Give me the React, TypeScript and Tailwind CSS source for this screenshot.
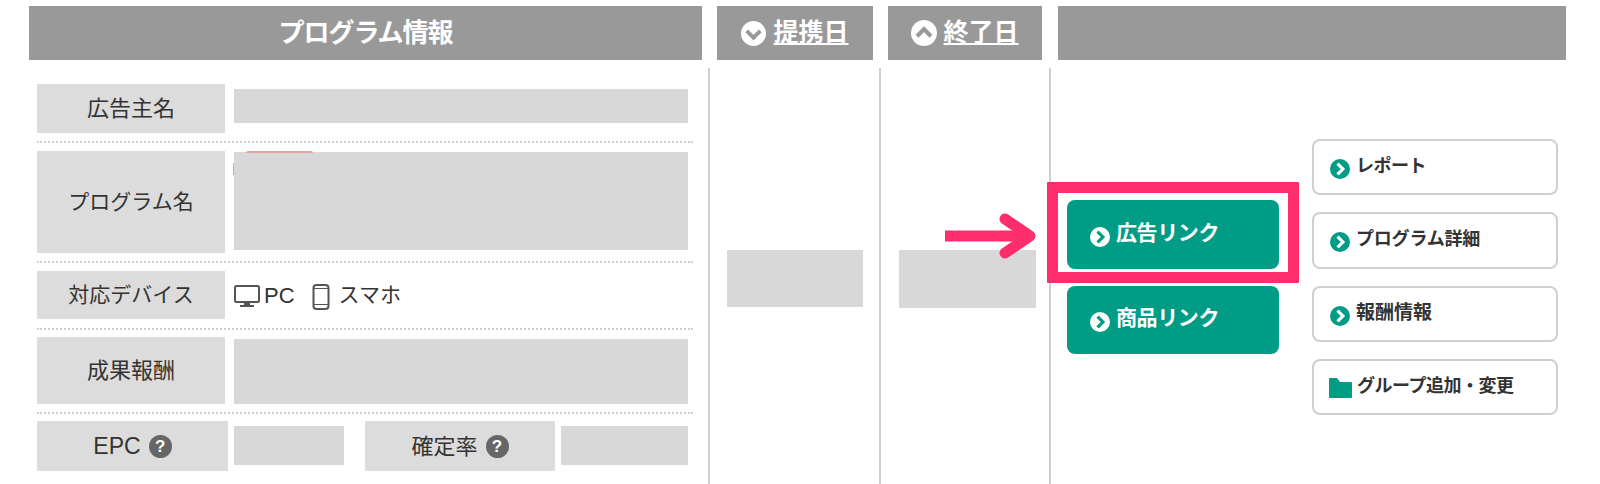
import React from "react";

const font = { fontFamily: '"Liberation Sans", "Noto Sans CJK JP", sans-serif' };

const Chevron = ({ dir, bg, fg, size }: { dir: "down" | "up" | "right"; bg: string; fg: string; size: number }) => {
  const d =
    dir === "down"
      ? "M5.5 9.5 L12 16 L18.5 9.5"
      : dir === "up"
        ? "M5.5 15 L12 8.5 L18.5 15"
        : "M9 5.5 L15.5 12 L9 18.5";
  return (
    <svg width={size} height={size} viewBox="0 0 24 24" className="shrink-0">
      <circle cx="12" cy="12" r="12" fill={bg} />
      <path d={d} fill="none" stroke={fg} strokeWidth="3.8" />
    </svg>
  );
};

const Help = () => (
  <span className="ml-[8px] flex h-[23px] w-[23px] items-center justify-center rounded-full bg-[#666666] text-[17px] font-bold leading-none text-white">
    ?
  </span>
);

const Label = ({ children, className }: { children: React.ReactNode; className: string }) => (
  <div className={`flex shrink-0 items-center justify-center bg-[#dcdcdc] text-[#333333] ${className}`}>{children}</div>
);

const SubButton = ({ text, folder, className, height }: { text: string; folder?: boolean; className: string; height: string }) => (
  <div className={`flex w-[246px] items-center rounded-[8px] border-2 border-[#cfcfcf] bg-white pl-[16px] font-bold text-[#333333] ${height}`}>
    {folder ? (
      <svg width="23" height="20" viewBox="0 0 23 20" className="mr-[5px] -ml-[1px] mt-[2px] shrink-0">
        <path d="M1 0 H8 L11 4 H22 a1 1 0 0 1 1 1 V19 a1 1 0 0 1 -1 1 H1 a1 1 0 0 1 -1 -1 V1 a1 1 0 0 1 1 -1 Z" fill="#009c85" />
      </svg>
    ) : (
      <span className="mr-[6px] mt-[3px]">
        <Chevron dir="right" bg="#009c85" fg="#ffffff" size={20} />
      </span>
    )}
    <span className={`-mt-[2px] ${className}`}>{text}</span>
  </div>
);

const MainButton = ({ text }: { text: string }) => (
  <div className="flex h-full w-[212px] items-center rounded-[8px] bg-[#009c85] pl-[23px] text-[21px] font-bold tracking-[-0.4px] text-white">
    <span className="mr-[6px] mt-[4px]">
      <Chevron dir="right" bg="#ffffff" fg="#009c85" size={20} />
    </span>
    <span className="-mt-[4px]">{text}</span>
  </div>
);

export default function App() {
  return (
    <div style={font} className="h-[484px] w-[1600px] overflow-hidden bg-white">
      {/* header bars */}
      <div className="flex pl-[29px] pt-[6px] text-white">
        <div className="flex h-[54px] w-[673px] items-center justify-center bg-[#999999] text-[26px] font-bold tracking-[-1px]">
          プログラム情報
        </div>
        <div className="ml-[15px] flex h-[54px] w-[156px] items-center justify-center gap-[7px] bg-[#999999] text-[25px] font-bold">
          <Chevron dir="down" bg="#ffffff" fg="#999999" size={25} />
          <span className="underline underline-offset-2">提携日</span>
        </div>
        <div className="ml-[15px] flex h-[54px] w-[154px] items-center justify-center gap-[6px] bg-[#999999] text-[25px] font-bold">
          <Chevron dir="up" bg="#ffffff" fg="#999999" size={26} />
          <span className="underline underline-offset-2">終了日</span>
        </div>
        <div className="ml-[16px] h-[54px] w-[508px] bg-[#999999]" />
      </div>

      {/* body */}
      <div className="mt-[8px] flex h-[416px]">
        <div className="ml-[37px] w-[671px] pt-[16px] text-[21px]">
          <div className="w-[656px]">
            <div className="mb-[8px] flex h-[59px] gap-[9px] border-b-2 border-dotted border-[#d0d0d0] pb-[8px]">
              <Label className="w-[188px] text-[22px]">広告主名</Label>
              <div className="mt-[5px] h-[34px] w-[454px] bg-[#d8d8d8]" />
            </div>
            <div className="mb-[8px] flex h-[112px] gap-[9px] border-b-2 border-dotted border-[#d0d0d0] pb-[8px]">
              <Label className="w-[188px]">プログラム名</Label>
              <div className="relative mt-[1px] h-[98px] w-[454px] bg-[#d8d8d8]">
                <div className="absolute -top-[1px] left-[12px] h-[2px] w-[67px] rounded-t-[2px] bg-[#e8a0a0]" />
                <div className="absolute top-[11px] -left-[1px] h-[12px] w-[1px] bg-[#e8a0a0]" />
              </div>
            </div>
            <div className="mb-[7px] flex h-[59px] gap-[9px] border-b-2 border-dotted border-[#d0d0d0] pb-[9px]">
              <Label className="w-[188px]">対応デバイス</Label>
              <div className="flex items-center text-[#333333]">
                <svg width="26" height="24" viewBox="0 0 26 24" className="mt-[4px] mr-[4px]">
                  <rect x="1" y="1" width="24" height="16" rx="1.5" fill="none" stroke="#555555" strokeWidth="2" />
                  <path d="M10 18 h6 v2 h4 v2 H6 v-2 h4 Z" fill="#555555" />
                </svg>
                <span className="text-[22px]">PC</span>
                <svg width="18" height="26" viewBox="0 0 18 26" className="mt-[3px] ml-[17px] mr-[9px]">
                  <rect x="1.5" y="1" width="15" height="24" rx="3" fill="none" stroke="#555555" strokeWidth="2" />
                  <path d="M2 4.5 H16 M2 20.5 H16" stroke="#555555" strokeWidth="1.2" />
                </svg>
                <span>スマホ</span>
              </div>
            </div>
            <div className="mb-[7px] flex h-[77px] gap-[9px] border-b-2 border-dotted border-[#d0d0d0] pb-[8px]">
              <Label className="w-[188px] text-[22px]">成果報酬</Label>
              <div className="mt-[2px] h-[65px] w-[454px] bg-[#d8d8d8]" />
            </div>
            <div className="flex h-[50px]">
              <Label className="w-[191px] text-[23px]">
                EPC
                <Help />
              </Label>
              <div className="ml-[6px] mt-[5px] h-[39px] w-[110px] bg-[#d8d8d8]" />
              <Label className="ml-[21px] w-[190px] text-[22px]">
                確定率
                <Help />
              </Label>
              <div className="ml-[6px] mt-[5px] h-[39px] w-[127px] bg-[#d8d8d8]" />
            </div>
          </div>
        </div>

        <div className="flex w-[171px] items-start border-l-2 border-[#cfcfcf] pl-[17px]">
          <div className="mt-[182px] h-[57px] w-[136px] bg-[#d8d8d8]" />
        </div>

        <div className="flex w-[170px] items-start border-l-2 border-[#cfcfcf] pl-[18px]">
          <div className="mt-[182px] h-[58px] w-[137px] bg-[#d8d8d8]" />
        </div>

        <div className="relative flex flex-1 border-l-2 border-[#cfcfcf] pl-[16px]">
          <div className="mt-[132px] flex w-[212px] flex-col gap-[17px]">
            <div className="h-[69px]">
              <MainButton text="広告リンク" />
            </div>
            <div className="h-[68px]">
              <MainButton text="商品リンク" />
            </div>
          </div>
          <div className="ml-[33px] mt-[71px] flex flex-col gap-[17px]">
            <SubButton text="レポート" height="h-[56px]" className="text-[18px] tracking-[-0.5px]" />
            <SubButton text="プログラム詳細" height="h-[57px]" className="text-[18px] tracking-[-0.2px]" />
            <SubButton text="報酬情報" height="h-[56px]" className="text-[19px]" />
            <SubButton text="グループ追加・変更" folder height="h-[56px]" className="text-[18px] tracking-[-0.5px]" />
          </div>

          {/* annotation overlay */}
          <div className="absolute top-[114px] -left-[4px] h-[101px] w-[252px] rounded-[1px] border-[11px] border-[#ff2d6b]" />
          <svg width="100" height="56" viewBox="0 0 100 56" className="absolute top-[140px] -left-[106px]">
            <path d="M0 28 H84" stroke="#ff2d6b" strokeWidth="11" />
            <path d="M60 11 L85 28 L60 45" fill="none" stroke="#ff2d6b" strokeWidth="11" strokeLinecap="round" strokeLinejoin="round" />
          </svg>
        </div>
      </div>
    </div>
  );
}
